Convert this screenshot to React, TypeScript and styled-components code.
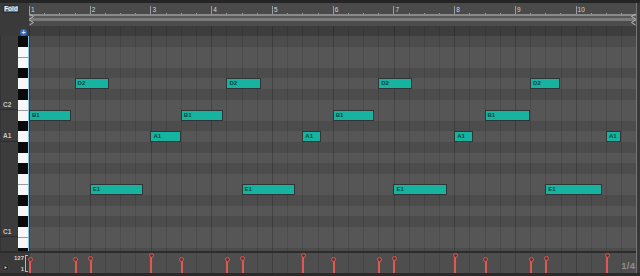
import React from "react";
import styled, { createGlobalStyle } from "styled-components";

const ROW_H = 10.6;
const BEATS = 40;
const BARS = 10;

type Key = { name: string; black: boolean; label?: boolean; split?: boolean };

const KEYS: Key[] = [
  { name: "F#2", black: true },
  { name: "F2", black: false },
  { name: "E2", black: false, split: true },
  { name: "D#2", black: true },
  { name: "D2", black: false },
  { name: "C#2", black: true },
  { name: "C2", black: false, label: true },
  { name: "B1", black: false, split: true },
  { name: "A#1", black: true },
  { name: "A1", black: false, label: true },
  { name: "G#1", black: true },
  { name: "G1", black: false },
  { name: "F#1", black: true },
  { name: "F1", black: false },
  { name: "E1", black: false, split: true },
  { name: "D#1", black: true },
  { name: "D1", black: false },
  { name: "C#1", black: true },
  { name: "C1", black: false, label: true },
  { name: "B0", black: false, split: true },
  { name: "A#0", black: true },
];

// pitch, start beat, length in beats, velocity
const NOTES: [string, number, number, number][] = [
  ["B1", 0, 2.75, 89],
  ["D2", 3, 2.25, 89],
  ["E1", 4, 3.5, 97],
  ["A1", 8, 2, 114],
  ["B1", 10, 2.75, 89],
  ["D2", 13, 2.25, 89],
  ["E1", 14, 3.5, 97],
  ["A1", 18, 1.25, 114],
  ["B1", 20, 2.75, 89],
  ["D2", 23, 2.25, 89],
  ["E1", 24, 3.5, 97],
  ["A1", 28, 1.25, 114],
  ["B1", 30, 3, 89],
  ["D2", 33, 2, 89],
  ["E1", 34, 3.75, 97],
  ["A1", 38, 1, 114],
];

const GlobalStyle = createGlobalStyle`
  html, body {
    margin: 0;
    padding: 0;
    background: #262626;
  }
  body {
    font-family: "Liberation Sans", Arial, sans-serif;
  }
`;

const Frame = styled.div`
  width: 640px;
  height: 276px;
  display: grid;
  grid-template-columns: 29px 607.4px 1fr;
  grid-template-rows: 3px 33px 215px 2px 20px 3px;
  background: #262626;
  overflow: hidden;
`;

const TopStrip = styled.div`
  grid-column: 1 / -1;
  grid-row: 1;
  background: #242424;
`;

const BottomStrip = styled.div`
  grid-column: 1 / -1;
  grid-row: 6;
  background: #2a2a2a;
`;

const RightEdge = styled.div`
  grid-column: 3;
  grid-row: 2 / 6;
  background: #383838;
  border-left: 1px solid #767676;
`;

const HeaderLeft = styled.div`
  grid-column: 1;
  grid-row: 2;
  background: #3a3a3a;
  display: flex;
  flex-direction: column;
  justify-content: space-between;
  align-items: flex-start;
`;

const FoldButton = styled.div`
  margin: 2px 0 0 3px;
  width: 16px;
  height: 8px;
  box-sizing: border-box;
  background: #6a6a6a;
  border: 1px solid #2c2c2c;
  color: #f2f2f2;
  font-size: 6.5px;
  font-weight: bold;
  line-height: 6px;
  text-align: center;
`;

const AddButton = styled.div`
  align-self: flex-end;
  margin: 0 2px 0 0;
  width: 7px;
  height: 7px;
  border-radius: 50%;
  background: #2f6cc0;
  color: #dbe8ff;
  font-size: 7px;
  font-weight: bold;
  line-height: 7px;
  text-align: center;
`;

const Ruler = styled.div`
  grid-column: 2;
  grid-row: 2;
  position: relative;
  display: flex;
  flex-direction: column;
  background: #4a4a4a;
`;

const BarNumbers = styled.div`
  height: 11px;
  display: flex;
`;

const BarCell = styled.div`
  flex: 1;
  display: flex;
`;

const BeatSlot = styled.div<{ $bar?: boolean }>`
  flex: 1;
  position: relative;
  color: #d4d4d4;
  font-size: 6.5px;
  line-height: 7px;
  padding: 3px 0 0 2px;
  &::before {
    content: "";
    position: absolute;
    left: 0;
    bottom: 0;
    width: 1px;
    height: ${(p) => (p.$bar ? "8px" : "1.5px")};
    background: #9c9c9c;
  }
`;

const RulerLine = styled.div`
  height: 2px;
  background: #8a8a8a;
`;

const RulerGap = styled.div<{ $h: number; $bg: string }>`
  height: ${(p) => p.$h}px;
  background: ${(p) => p.$bg};
`;

const ScrollStrip = styled.div`
  height: 10px;
  position: relative;
  background: #3d3d3d;
`;

const Marker = styled.svg<{ $side: "left" | "right" }>`
  position: absolute;
  top: 10px;
  ${(p) => (p.$side === "left" ? "left: 0;" : "right: 0;")}
`;

const BodyLeft = styled.div`
  grid-column: 1;
  grid-row: 3;
  display: flex;
  overflow: hidden;
`;

const LabelCol = styled.div`
  width: 18px;
  background: #3c3c3c;
  border-left: 1px solid #333;
  box-sizing: border-box;
  display: flex;
  flex-direction: column;
`;

const LabelRow = styled.div<{ $line?: boolean }>`
  height: ${ROW_H}px;
  flex-shrink: 0;
  box-sizing: border-box;
  border-bottom: ${(p) => (p.$line ? "1px solid #2a2a2a" : "none")};
  color: #cfcfcf;
  font-size: 6.5px;
  font-weight: bold;
  line-height: 10px;
  padding-left: 2px;
  text-shadow: 0 0 1px #222;
`;

const KeyCol = styled.div`
  width: 10px;
  display: flex;
  flex-direction: column;
`;

const KeyRow = styled.div<{ $black: boolean; $split?: boolean }>`
  height: ${ROW_H}px;
  flex-shrink: 0;
  box-sizing: border-box;
  background: ${(p) => (p.$black ? "#0a0a0a" : "#f7f7f7")};
  border-top: ${(p) => (p.$split ? "1px solid #9a9a9a" : "none")};
`;

const StartLine = styled.div`
  width: 1px;
  background: #86c3df;
`;

const NoteGrid = styled.div`
  grid-column: 2;
  grid-row: 3;
  position: relative;
  overflow: hidden;
  display: flex;
  flex-direction: column;
`;

const GridRow = styled.div<{ $black: boolean }>`
  height: ${ROW_H}px;
  flex-shrink: 0;
  background: ${(p) => (p.$black ? "#4c4c4c" : "#565656")};
`;

const BeatLines = styled.div`
  position: absolute;
  inset: 0;
  display: flex;
  pointer-events: none;
`;

const BeatCol = styled.div<{ $bar: boolean }>`
  flex: 1;
  border-left: 1px solid
    ${(p) => (p.$bar ? "rgba(0, 0, 0, 0.2)" : "rgba(0, 0, 0, 0.11)")};
`;

const NoteLayer = styled.div`
  position: absolute;
  inset: 0;
`;

const Note = styled.div`
  position: absolute;
  height: ${ROW_H}px;
  box-sizing: border-box;
  border: 1px solid #2e3534;
  background: #15b3a0;
  color: #0d443e;
  font-size: 6px;
  font-weight: bold;
  line-height: 8.6px;
  padding-left: 2px;
  overflow: hidden;
  white-space: nowrap;
`;

const Divider = styled.div`
  grid-column: 1 / 3;
  grid-row: 4;
  background: #2c2c2c;
`;

const VelLeft = styled.div`
  grid-column: 1;
  grid-row: 5;
  background: #3a3a3a;
  display: flex;
  align-items: stretch;
`;

const VelIcon = styled.div`
  flex: 1;
  display: flex;
  align-items: flex-end;
  padding: 0 0 2px 2px;
`;

const VelScale = styled.div`
  display: flex;
  flex-direction: column;
  justify-content: space-between;
  align-items: flex-end;
  color: #cfcfcf;
  font-size: 6px;
  font-weight: bold;
  line-height: 6px;
  padding: 2px 1px 1px 0;
`;

const Bracket = styled.div`
  width: 2px;
  margin: 2px 1px 1px 0;
  border: 1px solid #b5b5b5;
  border-right: none;
`;

const VelLane = styled.div`
  grid-column: 2;
  grid-row: 5;
  position: relative;
  background: #4e4e4e;
`;

const Stem = styled.div`
  position: absolute;
  bottom: 0;
  width: 2px;
  background: #e2574f;
  &::before {
    content: "";
    position: absolute;
    top: -2px;
    left: -1.5px;
    width: 3px;
    height: 3px;
    border: 1px solid #e2574f;
    border-radius: 50%;
    background: #5a3836;
  }
`;

const Quantize = styled.div`
  position: absolute;
  right: 1px;
  bottom: 2px;
  color: #8f8f8f;
  font-size: 9.5px;
  font-weight: bold;
  letter-spacing: 0.3px;
`;

const rowOf = (name: string) => KEYS.findIndex((k) => k.name === name);

const Beats = () => (
  <BeatLines>
    {Array.from({ length: BEATS }, (_, i) => (
      <BeatCol key={i} $bar={i % 4 === 0} />
    ))}
  </BeatLines>
);

const App = () => {
  return (
    <>
      <GlobalStyle />
      <Frame>
        <TopStrip />

        <HeaderLeft>
          <FoldButton>Fold</FoldButton>
          <AddButton>+</AddButton>
        </HeaderLeft>

        <Ruler>
          <BarNumbers>
            {Array.from({ length: BARS }, (_, b) => (
              <BarCell key={b}>
                <BeatSlot $bar>{b + 1}</BeatSlot>
                <BeatSlot />
                <BeatSlot />
                <BeatSlot />
              </BarCell>
            ))}
          </BarNumbers>
          <RulerLine />
          <RulerGap $h={2} $bg="#575757" />
          <RulerGap $h={3} $bg="#7a7a7a" />
          <RulerGap $h={5} $bg="#4c4c4c" />
          <ScrollStrip>
            <Beats />
          </ScrollStrip>
          <Marker $side="left" width="6" height="14" viewBox="0 0 6 14">
            <path d="M0.5 1 L4.5 3.5 L0.5 6" fill="none" stroke="#b8b8b8" strokeWidth="1" />
            <path d="M0.5 7 L4.5 9.5 L0.5 12" fill="none" stroke="#b8b8b8" strokeWidth="1" />
          </Marker>
          <Marker $side="right" width="6" height="14" viewBox="0 0 6 14">
            <path d="M5.5 1 L1.5 3.5 L5.5 6" fill="none" stroke="#b8b8b8" strokeWidth="1" />
            <path d="M5.5 7 L1.5 9.5 L5.5 12" fill="none" stroke="#b8b8b8" strokeWidth="1" />
          </Marker>
        </Ruler>

        <RightEdge />

        <BodyLeft>
          <LabelCol>
            {KEYS.map((k) => (
              <LabelRow key={k.name} $line={k.label}>
                {k.label ? k.name : ""}
              </LabelRow>
            ))}
          </LabelCol>
          <KeyCol>
            {KEYS.map((k) => (
              <KeyRow key={k.name} $black={k.black} $split={k.split} />
            ))}
          </KeyCol>
          <StartLine />
        </BodyLeft>

        <NoteGrid>
          {KEYS.map((k) => (
            <GridRow key={k.name} $black={k.black} />
          ))}
          <Beats />
          <NoteLayer>
            {NOTES.map(([pitch, start, len], i) => (
              <Note
                key={i}
                style={{
                  left: `${(start / BEATS) * 100}%`,
                  width: `${(len / BEATS) * 100}%`,
                  top: rowOf(pitch) * ROW_H,
                }}
              >
                {pitch}
              </Note>
            ))}
          </NoteLayer>
        </NoteGrid>

        <Divider />

        <VelLeft>
          <VelIcon>
            <svg width="7" height="7" viewBox="0 0 7 7">
              <circle cx="3.5" cy="3.5" r="3.2" fill="#262626" stroke="#555" strokeWidth="0.6" />
              <path d="M2.6 2 L5 3.5 L2.6 5 Z" fill="#d8d8d8" />
            </svg>
          </VelIcon>
          <VelScale>
            <span>127</span>
            <span>1</span>
          </VelScale>
          <Bracket />
        </VelLeft>

        <VelLane>
          <Beats />
          {NOTES.map(([, start, , vel], i) => (
            <Stem
              key={i}
              style={{
                left: `${(start / BEATS) * 100}%`,
                height: `${(vel / 127) * 100}%`,
              }}
            />
          ))}
          <Quantize>1/4</Quantize>
        </VelLane>

        <BottomStrip />
      </Frame>
    </>
  );
};

export default App;
